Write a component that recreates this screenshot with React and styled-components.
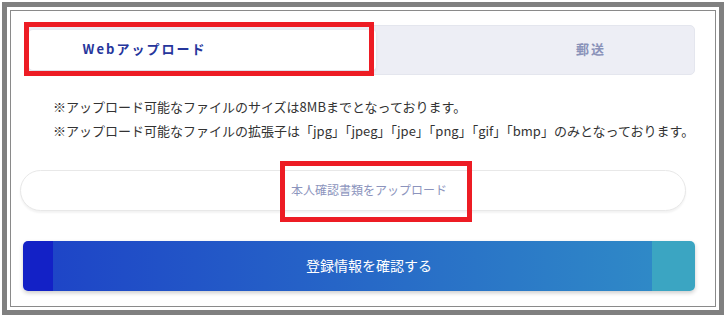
import React from 'react'
import styled, { createGlobalStyle } from 'styled-components'

const GlobalStyle = createGlobalStyle`
  body {
    margin: 0;
    background: #fff;
    font-family: "Noto Sans CJK JP", "Noto Sans", sans-serif;
  }
`

const App = () => {
  return (
    <Page>
      <GlobalStyle />
      <Outer>
        <Inner>
          <Tabs>
            <Tab $active $width="347px" $shift="-116px">Webアップロード</Tab>
            <Tab $shift="116px">郵送</Tab>
          </Tabs>

          <Notes>
            <li>※アップロード可能なファイルのサイズは8MBまでとなっております。</li>
            <li>※アップロード可能なファイルの拡張子は「jpg」「jpeg」「jpe」「png」「gif」「bmp」のみとなっております。</li>
          </Notes>

          <UploadBtn type="button">本人確認書類をアップロード</UploadBtn>

          <SubmitBtn type="button">登録情報を確認する</SubmitBtn>

          <Marker $left="13px" $top="11px" $w="350px" $h="54px" />
          <Marker $left="269px" $top="150px" $w="192px" $h="61px" />
        </Inner>
      </Outer>
    </Page>
  )
}

const Page = styled.div`
  width: 725px;
  height: 316px;
  box-sizing: border-box;
  padding: 2px 1px 1px 2px;
  background: #fff;
`

const Outer = styled.div`
  height: 100%;
  box-sizing: border-box;
  border: 5px solid #808080;
  padding: 3px;
`

const Inner = styled.div`
  position: relative;
  height: 100%;
  box-sizing: border-box;
  border: 1px solid #8a8a8a;
  display: flex;
  flex-direction: column;
  align-items: flex-start;
`

const Tabs = styled.div`
  margin: 14px 0 0 13px;
  width: 671px;
  height: 50px;
  box-sizing: border-box;
  padding: 4px;
  display: flex;
  background: #edeef5;
  border: 1px solid #e4e6ee;
  border-radius: 5px;
`

const Tab = styled.div`
  flex: ${p => (p.$width ? `0 0 ${p.$width}` : '1')};
  display: flex;
  align-items: center;
  justify-content: center;
  padding-bottom: 3px;
  ${p => (p.$shift.startsWith('-') ? `padding-right: ${p.$shift.slice(1)};` : `padding-left: ${p.$shift};`)}
  box-sizing: border-box;
  border-radius: 4px;
  background: ${p => (p.$active ? '#fff' : 'transparent')};
  box-shadow: ${p => (p.$active ? '0 1px 3px rgba(60, 70, 110, 0.12)' : 'none')};
  color: ${p => (p.$active ? '#26369c' : '#8a92b9')};
  font-size: 13px;
  font-weight: 700;
  letter-spacing: 2px;
`

const Notes = styled.ul`
  margin: 20px 0 0;
  padding: 0 0 0 42px;
  list-style: none;
  color: #333;
  font-size: 13px;
  line-height: 24px;
`

const UploadBtn = styled.button`
  margin: 27px 0 0 9px;
  width: 666px;
  height: 41px;
  padding: 0 0 2px 32px;
  border: 1px solid #e8e8e8;
  border-radius: 21px;
  background: #fff;
  box-shadow: 0 2px 2px rgba(0, 0, 0, 0.05);
  color: #8c94bd;
  font-family: inherit;
  font-size: 12px;
`

const SubmitBtn = styled.button`
  margin: 30px 0 0 12px;
  width: 672px;
  height: 50px;
  padding: 0 0 2px 20px;
  border: none;
  border-radius: 5px;
  background: linear-gradient(
    90deg,
    #1321c6 0,
    #1321c6 30px,
    #1e45c7 30px,
    #2f89c7 calc(100% - 43px),
    #3ba5c2 calc(100% - 43px),
    #3ba5c2 100%
  );
  box-shadow: 0 2px 4px rgba(0, 0, 0, 0.2);
  color: #fff;
  font-family: inherit;
  font-size: 14px;
`

const Marker = styled.div`
  position: absolute;
  left: ${p => p.$left};
  top: ${p => p.$top};
  width: ${p => p.$w};
  height: ${p => p.$h};
  box-sizing: border-box;
  border: 5px solid #ed1c24;
  pointer-events: none;
`

export default App
